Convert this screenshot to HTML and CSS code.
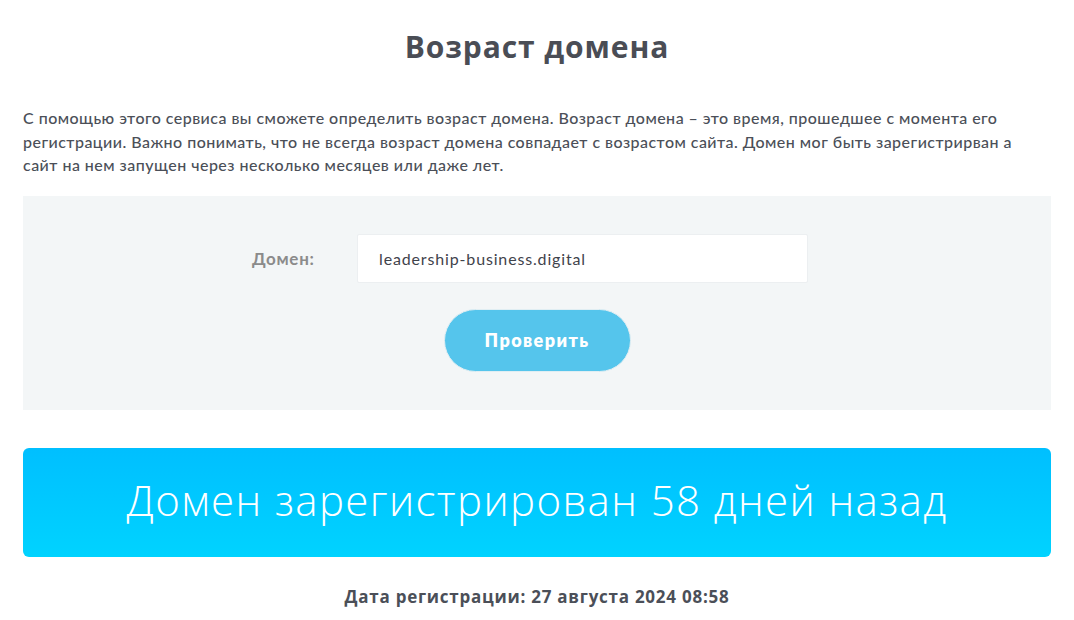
FILE: index.html
```html
<!DOCTYPE html>
<html lang="ru">
<head>
<meta charset="utf-8">
<title>Возраст домена</title>
<link rel="stylesheet" href="styles.css">
</head>
<body>
<main class="page">
  <h1 class="title">Возраст домена</h1>
  <p class="intro">С помощью этого сервиса вы сможете определить возраст домена. Возраст домена – это время, прошедшее с момента его регистрации. Важно понимать, что не всегда возраст домена совпадает с возрастом сайта. Домен мог быть зарегистрирван а сайт на нем запущен через несколько месяцев или даже лет.</p>
  <form class="check">
    <div class="row">
      <label class="label" for="domain">Домен:</label>
      <input class="input" id="domain" type="text" value="leadership-business.digital">
    </div>
    <button class="btn" type="button">Проверить</button>
  </form>
  <div class="result">Домен зарегистрирован 58 дней назад</div>
  <p class="date">Дата регистрации: 27 августа 2024 08:58</p>
</main>
</body>
</html>
```

FILE: styles.css
```css
* { box-sizing: border-box; }
html, body { margin: 0; padding: 0; background: #fff; }
body { font-family: "Lato", "Open Sans", sans-serif; color: #4b4f58; }
.page { padding: 0 23px; display: flex; flex-direction: column; }
.title {
  margin: 28px 0 0;
  text-align: center;
  font-family: "Open Sans", sans-serif;
  font-weight: 700;
  font-size: 30px;
  letter-spacing: 0.9px;
  line-height: 38px;
  color: #4a4d55;
}
.intro {
  margin: 40px 0 0;
  font-size: 16px;
  letter-spacing: 0.47px;
  line-height: 23.5px;
  font-weight: 500;
}
.check {
  margin-top: 19px;
  background: #f3f6f7;
  height: 214px;
  display: flex;
  flex-direction: column;
  align-items: center;
  padding-top: 38px;
}
.row { display: flex; align-items: center; margin-left: -14px; }
.label {
  width: 105px;
  font-size: 17px;
  letter-spacing: 0.7px;
  font-weight: 700;
  color: #8b8b8b;
}
.input {
  width: 451px;
  height: 49px;
  border: 1px solid #eceff1;
  border-radius: 2px;
  background: #fff;
  padding: 0 21px;
  font-family: "Lato", sans-serif;
  font-size: 16px;
  letter-spacing: 0.85px;
  color: #3f434b;
  outline: none;
}
.btn {
  margin-top: 26px;
  width: 187px;
  height: 63px;
  border-radius: 32px;
  border: 1px solid #e0eef3;
  background: #55c5ec;
  color: #fff;
  font-family: "Lato", sans-serif;
  font-weight: 800;
  font-size: 18px;
  letter-spacing: 1.4px;
}
.result {
  margin-top: 38px;
  height: 109px;
  border-radius: 6px;
  background: linear-gradient(180deg, #00bfff 0%, #00d3ff 100%);
  color: #fff;
  display: flex;
  align-items: center;
  justify-content: center;
  font-family: "Open Sans", sans-serif;
  font-weight: 300;
  font-size: 42px;
  letter-spacing: 1.4px;
  padding-bottom: 6px;
}
.date {
  margin: 28px 0 0;
  text-align: center;
  font-family: "Open Sans", sans-serif;
  font-weight: 700;
  font-size: 17px;
  letter-spacing: 0.75px;
  color: #4b4f58;
}
```
